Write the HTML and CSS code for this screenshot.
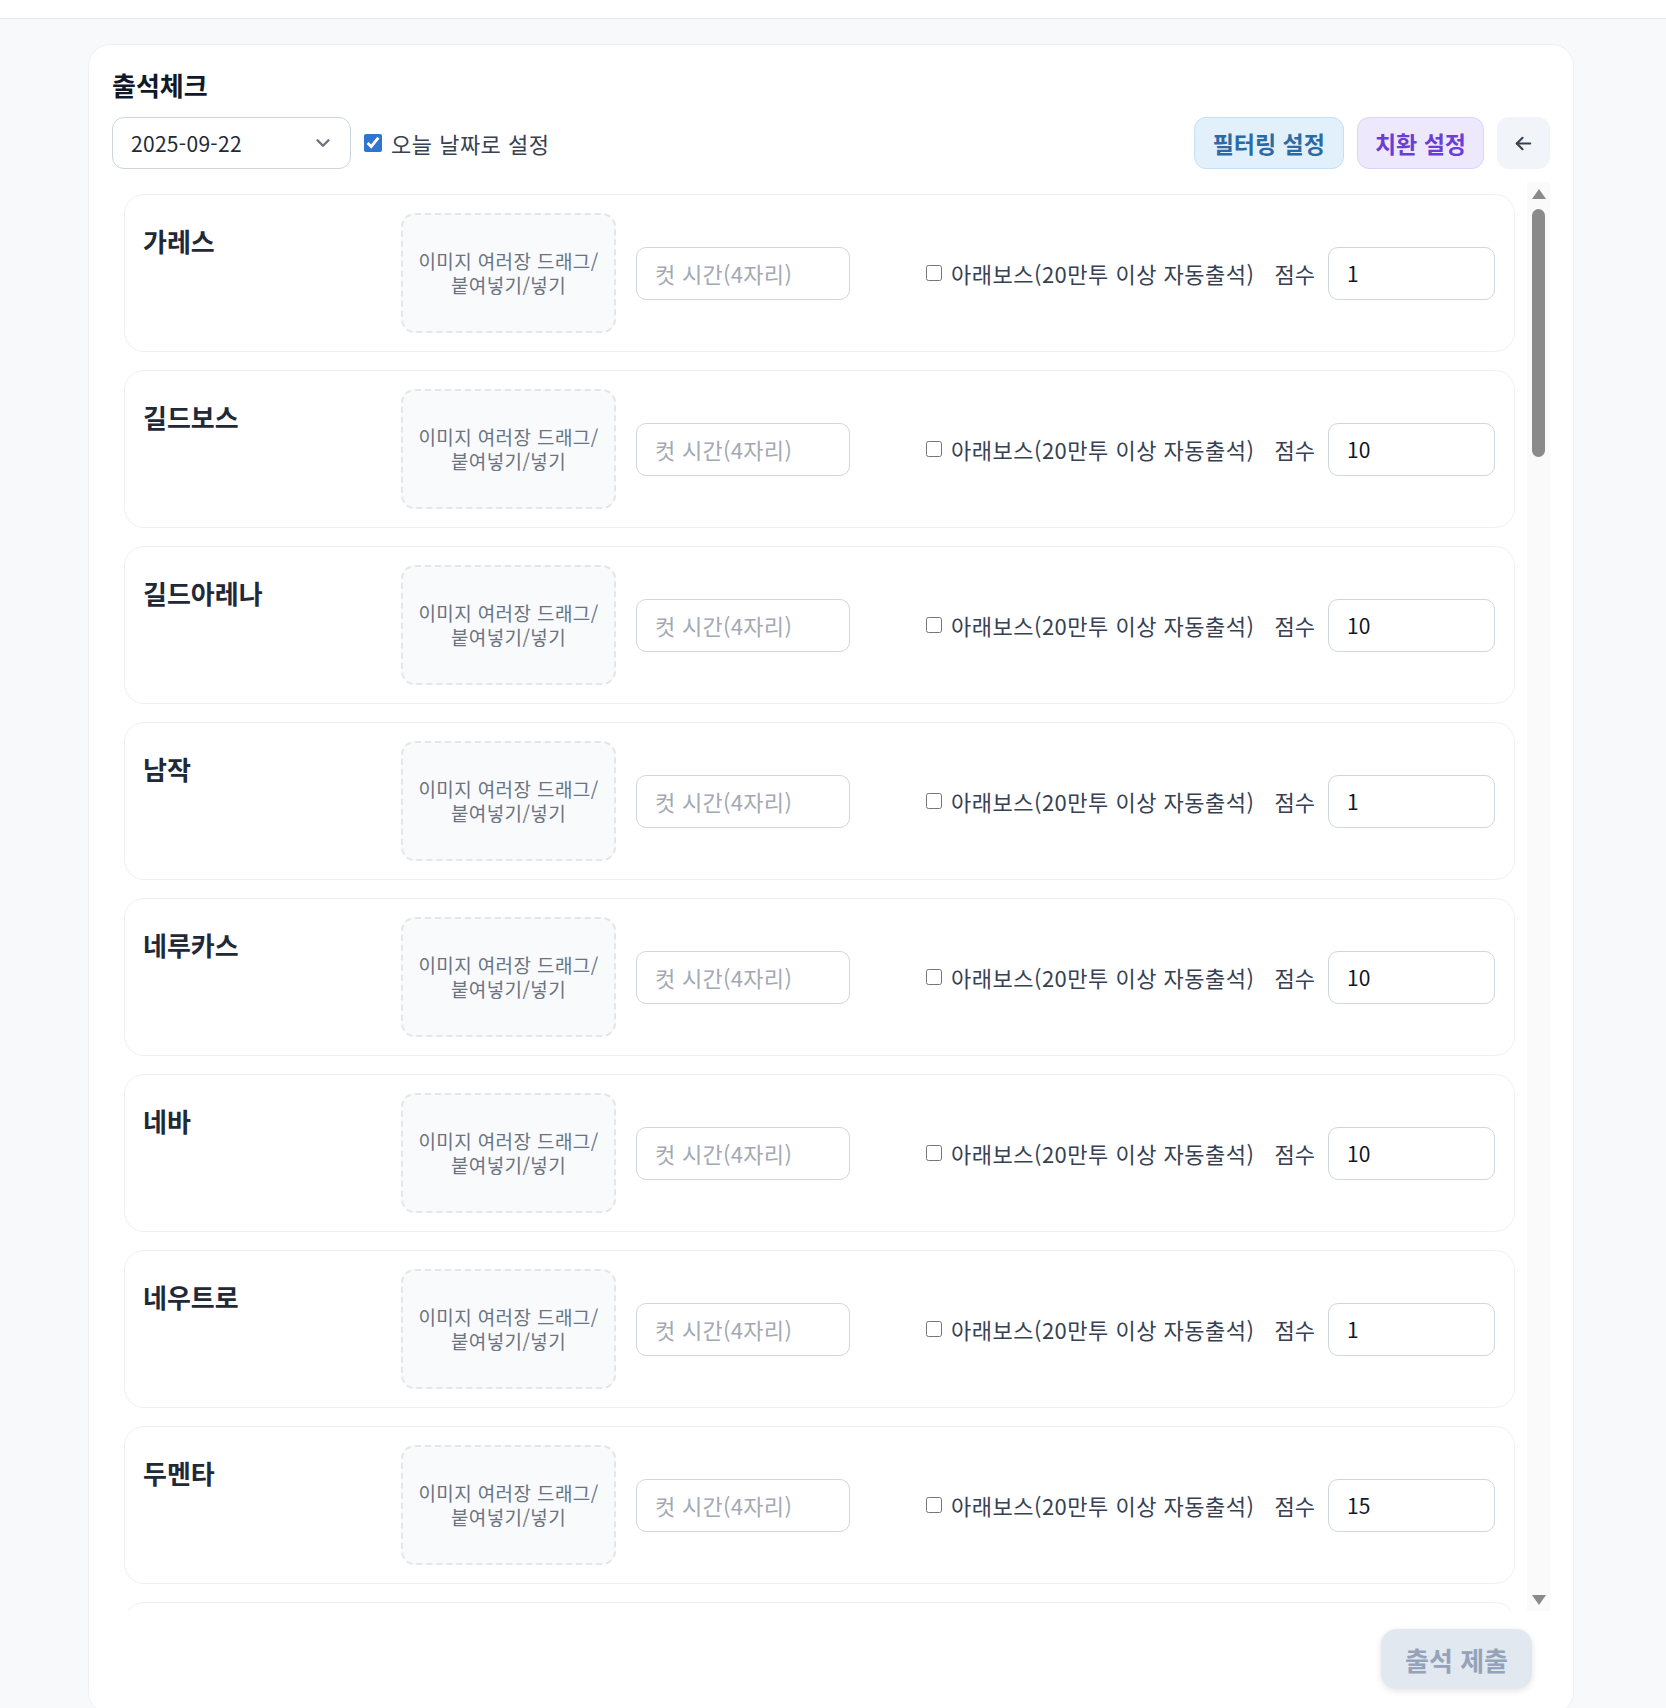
FILE: index.html
```html
<!DOCTYPE html>
<html lang="ko">
<head>
  <meta charset="UTF-8">
  <meta name="viewport" content="width=device-width, initial-scale=1.0">
  <title>출석체크</title>
  <link rel="stylesheet" href="styles.css">
</head>
<body>

  <div class="topBar"></div>

  <div class="page">
    <div class="attendCard">
      <h2 class="cardTitle">출석체크</h2>

      <div class="toolbar">
        <div class="dateSelect">
          <select id="dateSelect">
            <option value="2025-09-22">2025-09-22</option>
          </select>
          <svg class="chevron" width="22" height="22" viewBox="0 0 24 24" fill="none" stroke="currentColor" stroke-width="2.6" stroke-linecap="round" stroke-linejoin="round"><path d="M6 9l6 6 6-6"/></svg>
        </div>
        <label class="todayCheck"><input type="checkbox" id="todayCheck" checked>오늘 날짜로 설정</label>

        <div class="toolbarRight">
          <button class="filterBtn">필터링 설정</button>
          <button class="replaceBtn">치환 설정</button>
          <button class="backBtn" title="뒤로">
            <svg width="23" height="23" viewBox="0 0 24 24" fill="none" stroke="currentColor" stroke-width="2.2" stroke-linecap="round" stroke-linejoin="round"><path d="M19 12H5"/><path d="M11 18l-6-6 6-6"/></svg>
          </button>
        </div>
      </div>

      <div class="listWrap">
        <div id="bossList" class="bossList"></div>
        <div class="scrollRail">
          <span class="railArrow up"></span>
          <div id="railTrack" class="railTrack"><div id="railThumb" class="railThumb"></div></div>
          <span class="railArrow down"></span>
        </div>
      </div>

      <div class="footer">
        <button class="submitBtn" disabled>출석 제출</button>
      </div>
    </div>
  </div>

  <script>
    const bosses = [
      ['가레스', 1], ['길드보스', 10], ['길드아레나', 10], ['남작', 1],
      ['네루카스', 10], ['네바', 10], ['네우트로', 1], ['두멘타', 15],
      ['라바나', 10], ['라이노', 1], ['란도르', 10], ['레드스컬', 1],
      ['리치', 10], ['마녀', 1], ['메두사', 10], ['몽마', 1],
      ['바실라', 10], ['바포메트', 15], ['베룬', 1], ['벨로스', 10],
      ['사르카', 10], ['샤우드', 1], ['세르칸', 10], ['스콜피온', 1],
      ['실라', 10], ['아라크네', 15], ['아르고스', 10], ['안타레스', 15],
      ['에고스', 10], ['에이드', 1], ['오르쿠스', 10], ['오크왕', 1],
      ['우로스', 10], ['이그니스', 15], ['자칸', 10], ['제니러스', 10],
      ['카르투스', 1], ['칼리고', 10], ['코아토르', 10], ['타로크', 1],
      ['탈라킨', 10], ['티미트리스', 15], ['판드라이드', 10], ['하르시온', 10],
      ['헬가', 15]
    ];

    const bossList = document.getElementById('bossList');
    const railTrack = document.getElementById('railTrack');
    const railThumb = document.getElementById('railThumb');

    function createRow(name, score) {
      const row = document.createElement('div');
      row.className = 'bossRow';
      row.innerHTML =
        '<div class="bossName"></div>' +
        '<div class="dropZone">이미지 여러장 드래그/<br>붙여넣기/넣기</div>' +
        '<input type="text" class="cutTime" placeholder="컷 시간(4자리)" maxlength="4">' +
        '<label class="autoCheck"><input type="checkbox">아래보스(20만투 이상 자동출석)</label>' +
        '<span class="scoreLabel">점수</span>' +
        '<input type="text" class="scoreInput">';
      row.querySelector('.bossName').textContent = name;
      row.querySelector('.scoreInput').value = score;
      return row;
    }

    // keep the custom scrollbar thumb in sync with the list
    function updateThumb() {
      const trackHeight = railTrack.clientHeight - 10;
      const ratio = bossList.clientHeight / bossList.scrollHeight;
      const thumbHeight = Math.max(30, Math.round(trackHeight * ratio));
      const maxScroll = bossList.scrollHeight - bossList.clientHeight;
      const offset = maxScroll > 0 ? (bossList.scrollTop / maxScroll) * (trackHeight - thumbHeight) : 0;
      railThumb.style.height = thumbHeight + 'px';
      railThumb.style.transform = 'translateY(' + offset + 'px)';
    }

    bosses.forEach(([name, score]) => {
      bossList.appendChild(createRow(name, score));
    });

    bossList.addEventListener('scroll', updateThumb);
    updateThumb();
  </script>

</body>
</html>
```

FILE: styles.css
```css
html, body {
  height: 100%;
}
body {
  margin: 0;
  overflow: hidden;
  background-color: #f8f9fb;
  color: #374151;
  font-family: "Noto Sans CJK KR", "Noto Sans", sans-serif;
  font-size: 22px;
}
button, input, select {
  font-family: inherit;
}

.topBar {
  height: 18px;
  background-color: #fff;
  border-bottom: 1px solid #e5e7eb;
}
.page {
  padding: 25px 92px 0 88px;
}
.attendCard {
  background-color: #fff;
  border: 1px solid #eef0f4;
  border-radius: 22px;
  padding: 23px 23px 24px 23px;
}
.cardTitle {
  margin: 0 0 15px;
  font-size: 26px;
  line-height: 34px;
  font-weight: 700;
  color: #111827;
}

/* toolbar */
.toolbar {
  display: flex;
  align-items: center;
  height: 52px;
}
.dateSelect {
  position: relative;
  width: 239px;
  height: 52px;
}
.dateSelect select {
  appearance: none;
  width: 100%;
  height: 100%;
  padding: 0 40px 0 18px;
  border: 1px solid #cdd4de;
  border-radius: 12px;
  background-color: #fff;
  color: #1f2937;
  font-size: 21px;
  letter-spacing: 0.3px;
}
.chevron {
  position: absolute;
  right: 17px;
  top: 15px;
  color: #6b7280;
  pointer-events: none;
}
.todayCheck {
  display: flex;
  align-items: center;
  margin-left: 13px;
  letter-spacing: 0.5px;
  color: #374151;
}
.todayCheck input {
  width: 18px;
  height: 18px;
  margin: 0 9px 0 0;
  accent-color: #2f74d0;
}
.toolbarRight {
  display: flex;
  gap: 13px;
  margin-left: auto;
}
.filterBtn, .replaceBtn, .backBtn {
  height: 52px;
  padding: 0 18px;
  border-radius: 12px;
  font-size: 23px;
  font-weight: 700;
  cursor: pointer;
}
.filterBtn {
  background-color: #e2f0fc;
  border: 1px solid #c3e0f7;
  color: #2c6aa6;
}
.replaceBtn {
  padding: 0 17px;
  background-color: #ede8fc;
  border: 1px solid #ddd3f8;
  color: #6a3dd6;
}
.backBtn {
  width: 53px;
  padding: 0;
  display: flex;
  align-items: center;
  justify-content: center;
  background-color: #f1f4f9;
  border: none;
  color: #374151;
}

/* boss list with its own scroll rail */
.listWrap {
  display: flex;
  height: 1429px;
  margin-top: 13px;
}
.bossList {
  flex: 1;
  min-width: 0;
  box-sizing: border-box;
  padding: 12px;
  overflow-y: auto;
  scrollbar-width: none;
  display: flex;
  flex-direction: column;
  gap: 18px;
}
.bossList::-webkit-scrollbar {
  display: none;
}
.scrollRail {
  flex: 0 0 23px;
  display: flex;
  flex-direction: column;
  background-color: #fafafa;
}
.railArrow {
  flex: 0 0 22px;
  display: flex;
  align-items: center;
  justify-content: center;
}
.railArrow::before {
  content: "";
  width: 0;
  height: 0;
  border-left: 7px solid transparent;
  border-right: 7px solid transparent;
}
.railArrow.up::before {
  border-bottom: 10px solid #8a8a8a;
  margin-top: 1px;
}
.railArrow.down::before {
  border-top: 10px solid #8a8a8a;
}
.railTrack {
  flex: 1;
  padding: 5px 0;
}
.railThumb {
  width: 13px;
  margin: 0 auto;
  border-radius: 7px;
  background-color: #8a8a8a;
}

.bossRow {
  flex: 0 0 auto;
  display: flex;
  align-items: center;
  gap: 20px;
  height: 158px;
  box-sizing: border-box;
  padding: 18px 19px 18px 18px;
  border: 1px solid #eef0f3;
  border-radius: 20px;
  background-color: #fff;
}
.bossName {
  align-self: flex-start;
  flex: 0 0 238px;
  padding-top: 11px;
  font-size: 26px;
  line-height: 34px;
  font-weight: 700;
  color: #1f2937;
}
.dropZone {
  flex: 0 0 auto;
  width: 215px;
  height: 120px;
  box-sizing: border-box;
  display: flex;
  align-items: center;
  justify-content: center;
  text-align: center;
  border: 2px dashed #e3e6eb;
  border-radius: 14px;
  background-color: #f8fafc;
  color: #6b7280;
  font-size: 19px;
  letter-spacing: 0.4px;
  line-height: 24px;
}
.cutTime, .scoreInput {
  height: 53px;
  box-sizing: border-box;
  padding: 0 18px;
  border: 1px solid #cfd6e0;
  border-radius: 10px;
  color: #111827;
}
.cutTime {
  width: 214px;
  font-size: 22px;
  letter-spacing: 0.3px;
}
.cutTime::placeholder {
  color: #a3a9b4;
}
.autoCheck {
  display: flex;
  align-items: center;
  margin-left: auto;
  letter-spacing: 0.5px;
  color: #374151;
}
.autoCheck input {
  width: 16px;
  height: 16px;
  margin: 0 9px 0 0;
}
.scoreLabel {
  color: #374151;
}
.scoreInput {
  width: 167px;
  margin-left: -7px;
  font-size: 21px;
}

/* footer */
.footer {
  display: flex;
  justify-content: flex-end;
  margin-top: 18px;
  padding-right: 18px;
}
.submitBtn {
  height: 60px;
  padding: 0 24px;
  border: none;
  border-radius: 16px;
  background-color: #e2e8f0;
  color: #94a3b8;
  font-size: 26px;
  font-weight: 700;
  box-shadow: 0 2px 6px rgba(15, 23, 42, 0.12);
}
```
